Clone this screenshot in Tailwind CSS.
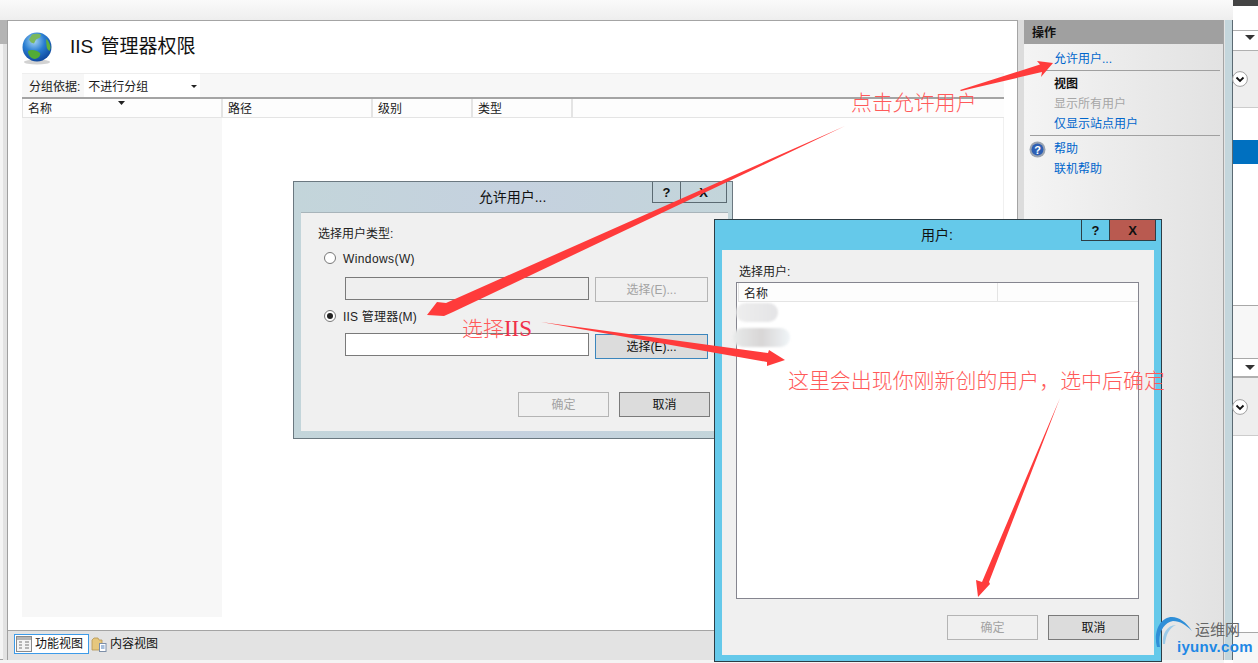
<!DOCTYPE html>
<html lang="zh-CN">
<head>
  <meta charset="UTF-8" />
  <title>IIS 管理器权限</title>
  <script src="https://cdn.jsdelivr.net/npm/@tailwindcss/browser@4"></script>
</head>
<body class="overflow-hidden bg-white">
<div class="relative w-[1258px] h-[663px] overflow-hidden text-[12px] leading-none text-[#1a1a1a] font-['Liberation_Sans','Noto_Sans_CJK_SC',sans-serif]">

  <!-- top bar -->
  <div class="h-[20px] bg-gradient-to-b from-[#fafafa] to-[#eeeeee]"></div>

  <div class="flex h-[640px]">
    <!-- left edge -->
    <div class="w-[8px] bg-[#e2e2e2] border-r border-[#a0a0a0] flex flex-col">
      <div class="h-[24px] bg-[#b4b4b4]"></div>
      <div class="h-[625px] w-[3px] bg-[#f4f4f4] border-b border-[#a0a0a0]"></div>
    </div>

    <!-- center column -->
    <div class="w-[1010px] flex flex-col bg-[#e3e3e3]">
      <div class="h-[611px] bg-white border-t border-b border-r border-[#a4a4a4] flex flex-col pl-[14px] pr-[13px]">
        <!-- title -->
        <div class="h-[52px] flex items-center shrink-0">
          <svg class="w-[30px] h-[33px] mt-[3px]" viewBox="0 0 30 33">
            <defs>
              <radialGradient id="sea" cx="0.4" cy="0.3" r="0.8">
                <stop offset="0" stop-color="#a9d6f2" />
                <stop offset="0.45" stop-color="#2a7ed2" />
                <stop offset="1" stop-color="#0a3c92" />
              </radialGradient>
            </defs>
            <ellipse cx="15" cy="30" rx="13" ry="2.500" fill="#d2d2d2" />
            <circle cx="15" cy="15" r="14.500" fill="url(#sea)" />
            <path d="M10 2.500c3-1 7-1 9 0l-1 3-4 2-2 4-3-1-2-3z" fill="#7ab85c" />
            <path d="M24 7c2 1 4.500 5 4.500 9l-1 3c-2-1-3-3-3-6z" fill="#5fb13c" />
            <path d="M6 19c3-2 9-1 12 2 1 2-1 5-5 6-4 0-7-4-7-8z" fill="#52ac36" />
          </svg>
          <h1 class="ml-[18px] -mt-[2px] text-[19px] text-[#111] [word-spacing:2px]">IIS 管理器权限</h1>
        </div>

        <!-- group by toolbar -->
        <div class="h-[26px] shrink-0 flex items-center bg-[#f7f7f7] border-t border-[#eeeeee] border-b-2 border-b-[#a4a4a4] pl-[7px]">
          <span class="pt-[2px]">分组依据:</span>
          <div class="ml-[4px] w-[116px] h-[23px] bg-white flex items-center justify-between pl-[4px] pr-[3px] pt-[2px]">
            <span>不进行分组</span>
            <svg class="w-[6px] h-[4px]" viewBox="0 0 6 4"><path d="M0 0h6L3 3z" fill="#222" /></svg>
          </div>
        </div>

        <!-- table head -->
        <div class="h-[19px] shrink-0 flex border-b border-[#e4e4e4] bg-[#fdfdfd]">
          <div class="relative w-[201px] pl-[5px] pt-[4px] border-r-2 border-l border-[#e4e4e4]">名称
            <svg class="absolute left-[95px] top-[2px] w-[7px] h-[4px]" viewBox="0 0 7 4"><path d="M0 0h7L3.500 4z" fill="#222" /></svg>
          </div>
          <div class="w-[150px] pl-[5px] pt-[4px] border-r-2 border-[#e4e4e4]">路径</div>
          <div class="w-[100px] pl-[5px] pt-[4px] border-r-2 border-[#e4e4e4]">级别</div>
          <div class="w-[100px] pl-[5px] pt-[4px] border-r-2 border-[#e4e4e4]">类型</div>
        </div>

        <!-- table body -->
        <div class="h-[499px] border-r border-[#f0f0f0]">
          <div class="w-[200px] h-full bg-[#f7f7f7]"></div>
        </div>
      </div>

      <!-- view tabs -->
      <div class="h-[29px] flex items-start pt-[3px] pl-[6px]">
        <div class="h-[20px] w-[75px] border border-[#3d9be9] bg-white flex items-center pl-[1px]">
          <svg class="w-[16px] h-[16px]" viewBox="0 0 16 16">
            <rect x="0.500" y="0.500" width="15" height="15" fill="#f4f4f4" stroke="#8a8a8a" />
            <rect x="1" y="1" width="14" height="3" fill="#b5b5b5" />
            <path d="M3 6h3M3 9h3M3 12h3M9 6h4M9 9h4M9 12h4" stroke="#777" />
          </svg>
          <span class="ml-[3px] text-[#111]">功能视图</span>
        </div>
        <svg class="ml-[2px] mt-[2px] w-[16px] h-[16px]" viewBox="0 0 16 16">
          <path d="M1 14V4l2-2h4l1 2h3v10z" fill="#e6c77d" stroke="#b59550" stroke-width="0.800" />
          <rect x="8.500" y="7.500" width="6.500" height="8" fill="#fff" stroke="#7d8fa8" />
          <path d="M10 10h3.500M10 12h3.500" stroke="#4f7fb8" />
        </svg>
        <span class="ml-[3px] mt-[4px] text-[#111]">内容视图</span>
      </div>
    </div>

    <!-- gutter -->
    <div class="w-[6px] bg-[#dcdcdc]"></div>

    <!-- actions pane -->
    <div class="w-[200px] h-[640px] border-r border-[#a4a4a4] bg-gradient-to-r from-[#f4f4f4] to-[#e2e2e2]">
      <div class="h-[24px] bg-[#a0a0a0] flex items-center pl-[8px] pt-[2px] text-[#111] font-bold">操作</div>
      <div class="pl-[30px] h-[26px] flex items-center pt-[4px] text-[#0066cc]">允许用户...</div>
      <div class="ml-[6px] mr-[3px] h-px bg-[#a0a0a0]"></div>
      <div class="pl-[30px] h-[20px] mt-[3px] flex items-center font-bold text-[#111]">视图</div>
      <div class="pl-[30px] h-[20px] flex items-center text-[#a6a6a6]">显示所有用户</div>
      <div class="pl-[30px] h-[20px] flex items-center text-[#0066cc]">仅显示站点用户</div>
      <div class="ml-[6px] mr-[3px] mt-[1px] h-px bg-[#a0a0a0]"></div>
      <div class="h-[20px] mt-[3px] flex items-center text-[#0066cc]">
        <svg class="ml-[5px] w-[17px] h-[17px]" viewBox="0 0 17 17">
          <circle cx="8.500" cy="8.500" r="8" fill="#9aa3b0" />
          <circle cx="8.500" cy="8.500" r="6" fill="#2d5fb4" />
          <text x="8.500" y="12.500" text-anchor="middle" font-size="11" font-weight="700" fill="#fff" font-family="Liberation Sans">?</text>
        </svg>
        <span class="ml-[8px]">帮助</span>
      </div>
      <div class="pl-[30px] h-[20px] flex items-center text-[#0066cc]">联机帮助</div>
    </div>

    <!-- window edge -->
    <div class="w-px bg-[#e4e4e4]"></div>
    <div class="w-[7px] bg-[#c4d6dc] border-r border-[#5b6a72] box-content"></div>

    <!-- window behind -->
    <div class="w-[25px] -mt-[20px] h-[663px] shrink-0 flex flex-col bg-white">
      <div class="h-[6px] bg-[#444444]"></div>
      <div class="h-[24px]"></div>
      <div class="h-[14px] flex items-center justify-end pr-[3px] border-t border-[#b0b0b0]">
        <svg class="w-[10px] h-[5px]" viewBox="0 0 10 5"><path d="M0 0h10L5 5z" fill="#333" /></svg>
      </div>
      <div class="h-[6px]"></div>
      <div class="h-[58px] bg-[#eeeeee] border-t border-[#b0b0b0] border-b border-b-[#cccccc] flex items-center">
        <svg class="w-[16px] h-[16px] -ml-[1px]" viewBox="0 0 16 16">
          <circle cx="8" cy="8" r="7.400" fill="#fff" stroke="#a0a0a0" />
          <path d="M4.500 6.500L8 10l3.500-3.500" fill="none" stroke="#111" stroke-width="1.800" />
        </svg>
      </div>
      <div class="h-[32px]"></div>
      <div class="h-[24px] bg-[#0070c0]"></div>
      <div class="h-[141px]"></div>
      <div class="h-[54px] bg-[#f7f7f7] border-t border-b border-[#a8a8a8]"></div>
      <div class="h-[17px] flex items-center justify-end pr-[3px]">
        <svg class="w-[10px] h-[5px]" viewBox="0 0 10 5"><path d="M0 0h10L5 5z" fill="#333" /></svg>
      </div>
      <div class="h-[60px] bg-[#eeeeee] border-t-2 border-[#b0b0b0] border-b border-b-[#cccccc] flex items-center">
        <svg class="w-[16px] h-[16px] -ml-[1px]" viewBox="0 0 16 16">
          <circle cx="8" cy="8" r="7.400" fill="#fff" stroke="#a0a0a0" />
          <path d="M4.500 6.500L8 10l3.500-3.500" fill="none" stroke="#111" stroke-width="1.800" />
        </svg>
      </div>
      <div class="h-[196px]"></div>
      <div class="flex-1 bg-[#f7f7f7] border-t border-[#a8a8a8]"></div>
    </div>
  </div>
  <div class="h-[3px] w-[1224px] bg-[#f4f4f4]"></div>

  <!-- dialog: 允许用户 -->
  <div class="absolute left-[293px] top-[181px] w-[440px] h-[258px] border border-[#6b7880] bg-gradient-to-r from-[#c3d5da] via-[#c5d1df] to-[#c3d5da] flex flex-col">
    <div class="relative h-[30px] shrink-0 flex items-center justify-center text-[14px] text-[#111] pr-[1px]">
      允许用户...
      <div class="absolute right-[5px] top-0 flex h-[21px] border border-t-0 border-[#5b6a72] text-[13px] font-bold">
        <div class="w-[28px] border-r border-[#5b6a72] flex items-center justify-center">?</div>
        <div class="w-[45px] flex items-center justify-center">X</div>
      </div>
    </div>
    <div class="mx-[7px] w-[427px] h-[219px] bg-[#f0f0f0] border-t border-[#a8b4ba] pl-[17px] pt-[14px]">
      <div class="text-[#222] leading-[14px]">选择用户类型:</div>
      <div class="flex items-center mt-[10px] ml-[6px] h-[14px] text-[#222]">
        <span class="w-[12px] h-[12px] rounded-full border border-[#777] bg-white"></span>
        <span class="ml-[7px] pt-[2px] tracking-[0.400px]">Windows(W)</span>
      </div>
      <div class="flex mt-[12px] ml-[27px]">
        <div class="w-[244px] h-[23px] border border-[#7a7a7a] bg-[#efefef]"></div>
        <div class="ml-[6px] w-[113px] h-[25px] border border-[#b4b4b4] flex items-center justify-center text-[#a3a3a3]">选择(E)...</div>
      </div>
      <div class="flex items-center mt-[7px] ml-[6px] h-[14px] text-[#222]">
        <span class="w-[12px] h-[12px] rounded-full border border-[#777] bg-white flex items-center justify-center"><span class="w-[6px] h-[6px] rounded-full bg-[#222]"></span></span>
        <span class="ml-[7px] pt-[1px] tracking-[0.200px]">IIS 管理器(M)</span>
      </div>
      <div class="flex mt-[10px] ml-[27px]">
        <div class="w-[244px] h-[23px] border border-[#7a7a7a] bg-white"></div>
        <div class="ml-[6px] mt-px w-[113px] h-[25px] border border-[#3b86bd] bg-[#dcdcdc] flex items-center justify-center text-[#111]">选择(E)...</div>
      </div>
      <div class="flex mt-[33px] ml-[200px] gap-[10px]">
        <div class="w-[91px] h-[25px] border border-[#b4b4b4] flex items-center justify-center text-[#a3a3a3]">确定</div>
        <div class="w-[91px] h-[25px] border border-[#7a7a7a] bg-[#dcdcdc] flex items-center justify-center text-[#111]">取消</div>
      </div>
    </div>
  </div>

  <!-- arrows that run under dialog 2 -->
  <svg class="absolute inset-0 w-[1258px] h-[663px] pointer-events-none" viewBox="0 0 1258 663">
    <polygon points="960,90 1040,64.500 1037,61 1053,63 1041,77 1042,72 961,91" fill="#ff3b3b" />
    <polygon points="845,126 446,303 437,302 427,315 444,316 453,312" fill="#ff3b3b" />
  </svg>

  <!-- dialog: 用户 -->
  <div class="absolute left-[714px] top-[219px] w-[448px] h-[443px] border border-[#2d3d45] bg-[#65c9ea] flex flex-col">
    <div class="relative h-[30px] shrink-0 flex items-center justify-center text-[14px] text-[#111] pr-[2px]">
      用户:
      <div class="absolute right-[5px] top-0 flex h-[21px] border border-t-0 border-[#2d3d45] text-[13px] font-bold">
        <div class="w-[28px] border-r border-[#2d3d45] flex items-center justify-center">?</div>
        <div class="w-[45px] bg-[#b95a50] flex items-center justify-center">X</div>
      </div>
    </div>
    <div class="mx-[7px] w-[432px] h-[405px] bg-[#f0f0f0] pl-[14px] pt-[15px]">
      <div class="text-[#222] leading-[14px] ml-[3px]">选择用户:</div>
      <div class="mt-[3px] w-[403px] h-[317px] bg-white border border-[#85858f]">
        <div class="h-[19px] flex border-b border-[#e4e4e4] bg-[#fdfdfd] ml-[1px]">
          <div class="w-[260px] pl-[5px] pt-[5px] border-x border-[#e4e4e4] text-[#222]">名称</div>
        </div>
      </div>
      <div class="flex mt-[16px] ml-[211px] gap-[10px]">
        <div class="w-[91px] h-[25px] border border-[#b4b4b4] flex items-center justify-center text-[#a3a3a3]">确定</div>
        <div class="w-[91px] h-[25px] border border-[#7a7a7a] bg-[#dcdcdc] flex items-center justify-center text-[#111]">取消</div>
      </div>
    </div>
  </div>

  <!-- blurred out user names -->
  <div class="absolute left-[736px] top-[303px] w-[42px] h-[19px] rounded-full bg-gradient-to-r from-[#eeeeee] to-[#e4e4e6] blur-[1px]"></div>
  <div class="absolute left-[733px] top-[328px] w-[57px] h-[19px] rounded-full bg-gradient-to-r from-[#e8eaea] via-[#d8d6d6] to-[#f0f5f8] blur-[1px]"></div>

  <!-- annotation arrows on top -->
  <svg class="absolute inset-0 w-[1258px] h-[663px] pointer-events-none" viewBox="0 0 1258 663">
    <polygon points="541,322 768,353 769,350 785,360 767,366 767,362" fill="#ff3b3b" />
    <polygon points="1060,398 989,582 990,584 978,597 976,580 982,582" fill="#ff3b3b" />
  </svg>

  <!-- annotation text -->
  <span class="absolute left-[851px] top-[92px] text-[20.950px] leading-[22px] text-[#ff5a5a] whitespace-nowrap font-light">点击允许用户</span>
  <span class="absolute left-[462px] top-[318px] text-[20.950px] leading-[22px] text-[#ff5a5a] whitespace-nowrap font-light">选择<span class="font-['Liberation_Serif',serif] text-[#f0304a] text-[23px]">IIS</span></span>
  <span class="absolute left-[788px] top-[370px] text-[20.950px] leading-[22px] text-[#ff5a5a] whitespace-nowrap font-light">这里会出现你刚新创的用户，选中后确定</span>

  <!-- watermark -->
  <svg class="absolute left-[1154px] top-[614px] w-[42px] h-[42px]" viewBox="0 0 42 42">
    <path d="M3 33C-1 18 6 3 18 3c7 0 14 5 20 14-6-6-12-10-19-10C10 8 3 20 6 33z" fill="#2f8fd8" />
    <path d="M9 30C8 20 13 11 22 11c-7 3-10 10-11 19z" fill="#9ccbe9" />
  </svg>
  <span class="absolute left-[1195px] top-[622px] text-[15px] leading-[16px] text-[#666] whitespace-nowrap">运维网</span>
  <span class="absolute left-[1177px] top-[639px] text-[15px] leading-[16px] font-bold text-[#1e88e5] tracking-[0.300px] whitespace-nowrap">iyunv.com</span>
</div>
</body>
</html>
